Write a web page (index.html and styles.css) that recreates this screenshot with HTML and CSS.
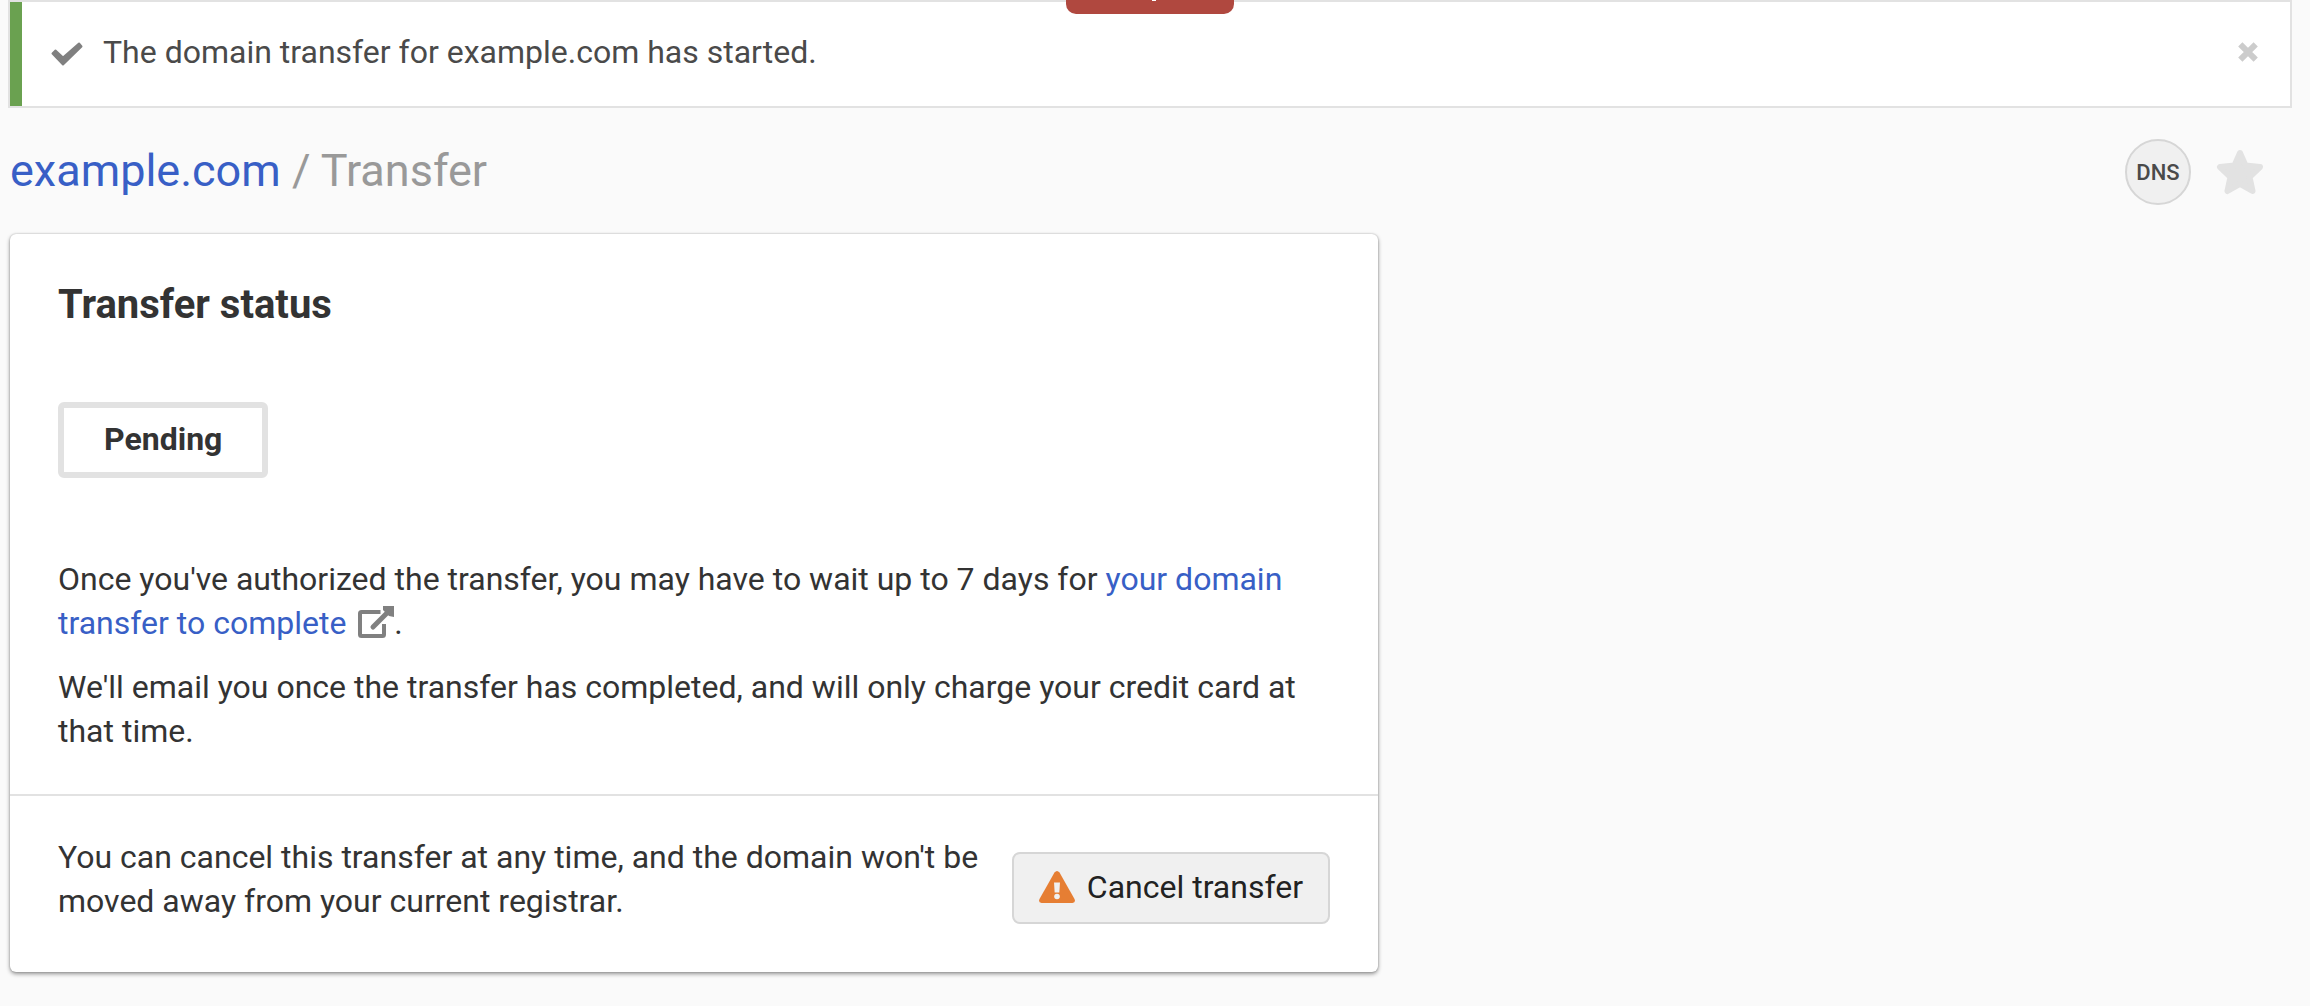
FILE: index.html
```html
<!DOCTYPE html>
<html lang="en">
<head>
<meta charset="utf-8">
<meta name="viewport" content="width=device-width, initial-scale=1">
<title>example.com / Transfer</title>
<link rel="stylesheet" href="styles.css">
</head>
<body>
<main class="page">
  <div class="alert" role="status">
    <svg class="alert-icon" viewBox="0 0 32 24" aria-hidden="true">
      <path d="M1.5 11.5 4.5 8.5 12 15.5 28 1.500 30.500 4.500 12 22.500Z"/>
    </svg>
    <p class="alert-text">The domain transfer for example.com has started.</p>
    <button class="alert-close" type="button" aria-label="Dismiss">
      <svg viewBox="0 0 20 20" aria-hidden="true">
        <path d="M2.300 2.300 17.700 17.700M17.700 2.300 2.300 17.700"/>
      </svg>
    </button>
    <div class="tab"></div>
  </div>

  <header class="header">
    <h1 class="title"><a href="#">example.com</a> / Transfer</h1>
    <div class="actions">
      <button class="dns" type="button">DNS</button>
      <button class="favorite" type="button" aria-label="Favorite">
        <svg viewBox="0 0 48 46" aria-hidden="true">
          <path d="M24 4 29.500 16.500 44 18 33.500 28 36.500 42 24 35 11.500 42 14.500 28 4 18 18.500 16.500Z"/>
        </svg>
      </button>
    </div>
  </header>

  <section class="card">
    <div class="card-body">
      <h2 class="card-title">Transfer status</h2>
      <div class="status">Pending</div>
      <p>Once you've authorized the transfer, you may have to wait up to 7 days for <a href="#">your domain transfer to complete</a> <svg class="external" viewBox="0 0 36 32" aria-hidden="true"><path class="external-box" d="M22.500 6H3.500Q2 6 2 7.500V28.500Q2 30 3.500 30H24.500Q26 30 26 28.500V18"/><path class="external-line" d="M15 21 31 5"/><path class="external-head" d="M25 0H36V11L31 10 25 4Z"/></svg>.</p>
      <p>We'll email you once the transfer has completed, and will only charge your credit card at that time.</p>
    </div>
    <div class="card-footer">
      <p>You can cancel this transfer at any time, and the domain won't be moved away from your current registrar.</p>
      <button class="cancel" type="button">
        <svg viewBox="0 0 36 32" aria-hidden="true">
          <path class="warning-shape" d="M15.500 1.500Q18-1.500 20.500 1.500L35.500 28Q37 31.500 33.500 32H2.500Q-1 31.500.5 28Z"/>
          <path class="warning-mark" d="M15 11.500H21L20.300 21.500H15.700Z"/>
          <circle class="warning-mark" cx="18" cy="25.500" r="2.800"/>
        </svg>
        Cancel transfer
      </button>
    </div>
  </section>
</main>
</body>
</html>
```
FILE: styles.css
```css
* {
  box-sizing: border-box;
}

body {
  margin: 0;
  background: #fafafa;
  color: #333;
  font-family: Roboto, "Liberation Sans", sans-serif;
  font-size: 32px;
  line-height: 44px;
}

h1, h2, p {
  margin: 0;
}

a {
  color: #385fc6;
  text-decoration: none;
}

button {
  font: inherit;
  cursor: pointer;
}

svg {
  flex: none;
}

.page {
  padding: 0 20px 32px 10px;
}

.alert {
  position: relative;
  display: flex;
  align-items: center;
  margin: 0 -2px;
  padding: 28px 32px 32px 28px;
  border: 2px solid #e2e2e2;
  background: #fff;
  color: #4a4a4a;
}

.alert::before {
  content: "";
  position: absolute;
  inset: 0 auto 0 0;
  width: 12px;
  background: #6aa150;
}

.alert-icon {
  width: 32px;
  height: 24px;
  margin: 4px 20px 0 13px;
  fill: #808080;
  stroke: #808080;
  stroke-width: 2;
  stroke-linejoin: round;
}

.alert-text {
  flex: 1;
}

.alert-close {
  display: flex;
  padding: 0;
  border: 0;
  background: none;
}

.alert-close svg {
  width: 20px;
  height: 20px;
  fill: none;
  stroke: #ccc;
  stroke-width: 6;
}

.tab {
  position: absolute;
  top: -2px;
  left: 50%;
  width: 168px;
  height: 14px;
  margin-left: -84px;
  border-radius: 0 0 10px 10px;
  background: #b0483f;
}

.tab::after {
  content: "";
  position: absolute;
  top: 0;
  left: 86px;
  width: 4px;
  height: 1px;
  background: #fff;
}

.header {
  display: flex;
  align-items: center;
  justify-content: space-between;
  padding: 31px 26px 29px 0;
}

.title {
  padding-bottom: 2px;
  color: #999;
  font-size: 45px;
  font-weight: 400;
  line-height: 60px;
}

.actions {
  display: flex;
  align-items: center;
  gap: 25px;
}

.dns {
  width: 66px;
  height: 66px;
  padding: 2px 0 0;
  border: 2px solid #d6d6d6;
  border-radius: 50%;
  background: #f0f0f0;
  color: #4a4a4a;
  font-size: 22px;
  font-weight: 500;
}

.favorite {
  display: flex;
  padding: 0;
  border: 0;
  background: none;
}

.favorite svg {
  width: 48px;
  height: 46px;
  fill: #e2e2e2;
  stroke: #e2e2e2;
  stroke-width: 6;
  stroke-linejoin: round;
}

.card {
  width: 60%;
  border-radius: 6px;
  background: #fff;
  box-shadow: 0 0 2px rgba(0, 0, 0, 0.25), 0 2px 4px rgba(0, 0, 0, 0.4);
}

.card-body {
  display: flex;
  flex-direction: column;
  align-items: flex-start;
  gap: 20px;
  padding: 45px 48px 41px;
}

.card-title {
  font-size: 40px;
  font-weight: 700;
  line-height: 52px;
}

.status {
  margin: 51px 0 59px;
  padding: 9px 40px 11px;
  border: 6px solid #e2e2e2;
  border-radius: 6px;
  font-weight: 700;
}

.external {
  width: 36px;
  height: 32px;
  margin-left: 4px;
  vertical-align: -4px;
}

.external-box,
.external-line {
  fill: none;
  stroke: #808080;
  stroke-width: 4;
}

.external-line {
  stroke-width: 5;
  stroke-linecap: round;
}

.external-head {
  fill: #808080;
}

.card-footer {
  display: flex;
  align-items: flex-end;
  justify-content: space-between;
  gap: 32px;
  padding: 39px 48px 48px;
  border-top: 2px solid #e2e2e2;
}

.card-footer p {
  padding-bottom: 1px;
}

.cancel {
  display: flex;
  flex: none;
  align-items: center;
  gap: 12px;
  padding: 11px 25px 13px;
  border: 2px solid #d6d6d6;
  border-radius: 8px;
  background: #f0f0f0;
  color: #222;
}

.cancel svg {
  width: 36px;
  height: 32px;
}

.warning-shape {
  fill: #e67e33;
}

.warning-mark {
  fill: #f0f0f0;
}
```
